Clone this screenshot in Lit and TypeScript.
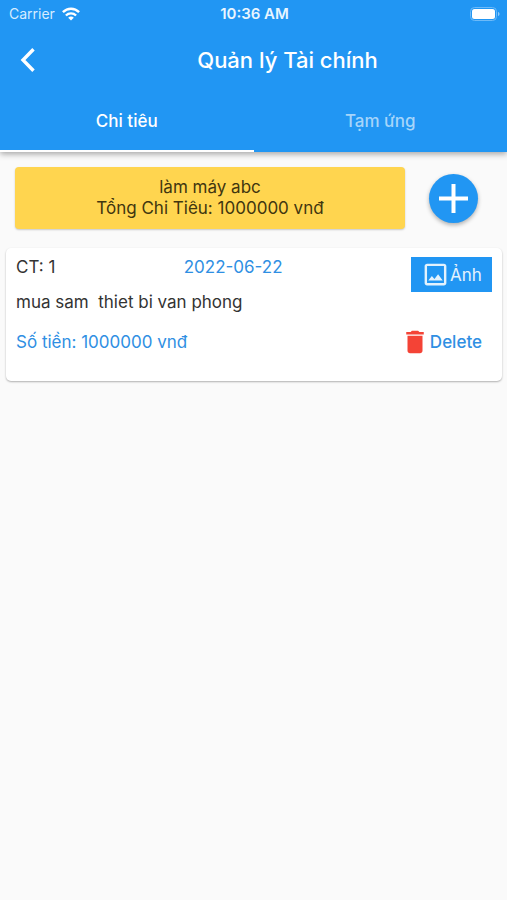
import { LitElement, html, css } from "lit";
import { customElement, state } from "lit/decorators.js";

interface Expense {
  code: number;
  date: string;
  note: string;
  amount: number;
}

@customElement("app-root")
export class AppRoot extends LitElement {
  static styles = css`
    :host {
      display: block;
      min-height: 100vh;
      background: #fafafa;
      color: #333;
      font-family: Inter, "Noto Sans", sans-serif;
      font-size: 17px;
      line-height: 20px;
    }
    button {
      font: inherit;
      color: inherit;
      background: none;
      border: 0;
      margin: 0;
      padding: 0;
      cursor: pointer;
    }
    svg {
      display: block;
      flex: none;
    }
    .header {
      background: #2196f3;
      color: #fff;
      box-shadow: 0 2px 6px rgba(0, 0, 0, 0.35);
    }
    .status {
      display: grid;
      grid-template-columns: 1fr auto 1fr;
      align-items: center;
      height: 27px;
      padding: 0 7px 0 9px;
      font-size: 14px;
    }
    .carrier {
      display: flex;
      align-items: center;
      gap: 7px;
      color: #d6ecff;
    }
    .time {
      font-size: 15px;
      font-weight: 600;
      color: #e8f5ff;
    }
    .battery {
      justify-self: end;
    }
    .bar {
      display: flex;
      align-items: center;
      height: 65px;
    }
    .back {
      display: flex;
      justify-content: center;
      width: 56px;
      margin-right: 12px;
    }
    h1 {
      flex: 1;
      margin: 0;
      text-align: center;
      font-size: 22px;
      font-weight: 500;
      line-height: 28px;
    }
    .tabs {
      display: grid;
      grid-template-columns: 1fr 1fr;
    }
    .tab {
      height: 60px;
      font-weight: 500;
      border-bottom: 2px solid transparent;
      color: #a6d5fa;
    }
    .tab.active {
      color: #fff;
      border-bottom-color: #fff;
    }
    .summary {
      display: flex;
      align-items: center;
      padding: 15px 29px 0 15px;
      gap: 24px;
    }
    .total {
      flex: 1;
      padding: 10px;
      text-align: center;
      line-height: 21px;
      color: #41360f;
      background: #ffd54f;
      border-radius: 4px;
      box-shadow: 0 1px 2px rgba(0, 0, 0, 0.2);
    }
    .total p {
      margin: 0;
    }
    .add {
      display: grid;
      place-items: center;
      width: 49px;
      height: 49px;
      border-radius: 50%;
      background: #2196f3;
      box-shadow: 0 2px 4px rgba(0, 0, 0, 0.3);
    }
    .card {
      margin: 19px 5px 0 6px;
      padding: 9px 10px 29px;
      background: #fff;
      border-radius: 5px;
      box-shadow: 0 1px 2px rgba(0, 0, 0, 0.3);
    }
    .top {
      display: flex;
      align-items: flex-start;
      justify-content: space-between;
    }
    .blue {
      color: #2f8fe3;
    }
    .photo {
      display: flex;
      align-items: center;
      justify-content: center;
      width: 81px;
      height: 35px;
      background: #2196f3;
      color: #e3f2fd;
    }
    .note {
      margin: 0 0 20px;
      white-space: pre;
    }
    .bottom {
      display: flex;
      align-items: center;
      justify-content: space-between;
      height: 20px;
    }
    .delete {
      display: flex;
      align-items: center;
      padding-right: 10px;
      font-weight: 500;
    }
  `;

  @state() private tab = 0;

  private tabs = ["Chi tiêu", "Tạm ứng"];

  private expenses: Expense[] = [
    { code: 1, date: "2022-06-22", note: "mua sam  thiet bi van phong", amount: 1000000 },
  ];

  private renderExpense(e: Expense) {
    return html`
      <article class="card">
        <div class="top">
          <span>CT: ${e.code}</span>
          <span class="blue">${e.date}</span>
          <button class="photo">
            <svg width="29" height="29" viewBox="0 0 24 24" fill="currentColor" aria-hidden="true">
              <path d="M19 5v14H5V5h14m0-2H5c-1.100 0-2 .9-2 2v14c0 1.100.9 2 2 2h14c1.100 0 2-.9 2-2V5c0-1.100-.9-2-2-2zm-4.860 8.860l-3 3.870L9 13.140 6 17h12l-3.860-5.140z" />
            </svg>
            <span>Ảnh</span>
          </button>
        </div>
        <p class="note">${e.note}</p>
        <div class="bottom">
          <span class="blue">Số tiền: ${e.amount} vnđ</span>
          <button class="delete blue">
            <svg width="30" height="30" viewBox="0 0 24 24" fill="#f44336" aria-hidden="true">
              <path d="M6 19c0 1.100.9 2 2 2h8c1.100 0 2-.9 2-2V7H6v12zM19 4h-3.500l-1-1h-5l-1 1H5v2h14V4z" />
            </svg>
            <span>Delete</span>
          </button>
        </div>
      </article>
    `;
  }

  render() {
    const total = this.expenses.reduce((sum, e) => sum + e.amount, 0);
    return html`
      <header class="header">
        <div class="status">
          <span class="carrier">
            Carrier
            <svg width="18" height="14" viewBox="0 0 18 14" fill="none" stroke="#fff" stroke-width="2.400" aria-hidden="true">
              <path d="M0.900 5.200C5.500 0.600 12.500 0.600 17.100 5.200" />
              <path d="M3.900 8.500C6.800 5.700 11.200 5.700 14.100 8.500" />
              <path d="M6.200 10.800C7.800 9.200 10.200 9.200 11.800 10.800L9 13.600Z" fill="#fff" stroke="none" />
            </svg>
          </span>
          <span class="time">10:36 AM</span>
          <svg class="battery" width="30" height="14" viewBox="0 0 30 14" aria-hidden="true">
            <rect x="0.500" y="0.500" width="26" height="13" rx="4" fill="none" stroke="#6dbaf8" />
            <rect x="2" y="2" width="23" height="10" rx="2.500" fill="#fff" />
            <path d="M28 5c2 .6 2 3.400 0 4z" fill="#8fcafa" />
          </svg>
        </div>
        <div class="bar">
          <button class="back" aria-label="Back">
            <svg width="16" height="24" viewBox="0 0 16 24" fill="none" stroke="#fff" stroke-width="3.400" aria-hidden="true">
              <path d="M13.500 1.200L3 12L13.500 22.800" />
            </svg>
          </button>
          <h1>Quản lý Tài chính</h1>
        </div>
        <nav class="tabs" role="tablist">
          ${this.tabs.map(
            (label, i) => html`
              <button
                class="tab ${i === this.tab ? "active" : ""}"
                role="tab"
                aria-selected=${i === this.tab}
                @click=${() => (this.tab = i)}
              >${label}</button>
            `
          )}
        </nav>
      </header>
      <main>
        <section class="summary">
          <div class="total">
            <p>làm máy abc</p>
            <p>Tổng Chi Tiêu: ${total} vnđ</p>
          </div>
          <button class="add" aria-label="Add">
            <svg width="29" height="29" viewBox="0 0 29 29" fill="#fff" aria-hidden="true">
              <path d="M12.500 0h4v12.500H29v4H16.500V29h-4V16.500H0v-4h12.500z" />
            </svg>
          </button>
        </section>
        ${this.expenses.map((e) => this.renderExpense(e))}
      </main>
    `;
  }
}
